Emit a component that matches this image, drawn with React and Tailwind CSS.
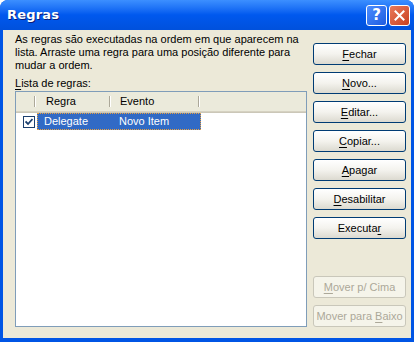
import React from "react";

const font = { fontFamily: '"Liberation Sans", Arial, sans-serif' };

function Btn({ pre = "", u, post = "", disabled = false }) {
  return (
    <div
      className={
        "h-[22px] w-[93px] rounded-[3px] border flex items-center justify-center text-[11px] leading-none " +
        (disabled
          ? "border-[#C9C7BA] bg-[#F5F4EA] text-[#ACA899]"
          : "border-[#003C74] bg-gradient-to-b from-[#FFFFFF] via-[#F4F3EE] to-[#DCDAD0] text-black")
      }
    >
      <span>
        {pre}
        <span className="underline underline-offset-[2px]">{u}</span>
        {post}
      </span>
    </div>
  );
}

export default function App() {
  return (
    <div
      className="w-[414px] h-[342px] flex flex-col bg-[#0055E5] rounded-t-[8px] overflow-hidden"
      style={font}
    >
      {/* Title bar */}
      <div className="h-[30px] shrink-0 flex items-center pl-[7px] pr-[4px] bg-gradient-to-b from-[#3C8FFF] via-[#0058EE] to-[#0051DC]">
        <div
          className="flex-1 text-white font-bold text-[13px] tracking-[0.2px]"
          style={{ fontFamily: '"DejaVu Sans", Verdana, sans-serif', textShadow: "1px 1px 0 #0A1E7A" }}
        >
          Regras
        </div>
        <div className="flex gap-[2px] items-center">
          <div className="w-[21px] h-[21px] rounded-[3px] border border-white bg-gradient-to-br from-[#4C8DFF] to-[#1E5BE0] flex items-center justify-center text-white font-bold text-[15px] leading-none" style={{ fontFamily: '"DejaVu Sans", sans-serif' }}>
            ?
          </div>
          <div className="w-[21px] h-[21px] rounded-[3px] border border-white bg-gradient-to-br from-[#E9795A] to-[#C9401F] flex items-center justify-center">
            <svg width="11" height="11" viewBox="0 0 11 11">
              <path d="M1.5 1.5 L9.5 9.5 M9.5 1.5 L1.5 9.5" stroke="white" strokeWidth="2" strokeLinecap="square" />
            </svg>
          </div>
        </div>
      </div>
      {/* Body */}
      <div className="flex-1 mx-[3px] mb-[4px] bg-[#ECE9D8] flex pl-[12px] pr-[5px]">
        <div className="w-[292px] flex flex-col pt-[3px] pb-[11px]">
          <div className="text-[11px] leading-[13px] text-black">
            As regras são executadas na ordem em que aparecem na
            <br />
            lista. Arraste uma regra para uma posição diferente para
            <br />
            mudar a ordem.
          </div>
          <div className="text-[11px] leading-[13px] mt-[5px] mb-[1px]">
            <span className="underline underline-offset-[2px]">L</span>ista de regras:
          </div>
          <div className="flex-1 border border-[#7F9DB9] bg-white flex flex-col">
            <div className="h-[19px] bg-[#EBEADB] flex text-[11px] items-center relative">
              <div className="w-[20px] h-full flex items-center justify-end">
                <div className="w-[1px] h-[11px] bg-[#ACA899] mr-[0px]" />
                <div className="w-[1px] h-[11px] bg-white" />
              </div>
              <div className="w-[75px] h-full flex items-center justify-between">
                <span className="pl-[10px]">Regra</span>
                <span className="flex"><span className="w-[1px] h-[11px] bg-[#ACA899]" /><span className="w-[1px] h-[11px] bg-white" /></span>
              </div>
              <div className="w-[89px] h-full flex items-center justify-between">
                <span className="pl-[9px]">Evento</span>
                <span className="flex"><span className="w-[1px] h-[11px] bg-[#ACA899]" /><span className="w-[1px] h-[11px] bg-white" /></span>
              </div>
            </div>
            <div className="h-[1px] bg-[#D6D2C2]" />
            <div className="h-[1px] bg-[#CBC7B8]" />
            <div className="h-[17px] flex items-center text-[11px]">
              <div className="w-[21px] flex justify-end pr-[2px]">
                <div className="w-[12px] h-[12px] border border-[#1C3F6E] bg-white flex items-center justify-center">
                  <svg width="8" height="8" viewBox="0 0 8 8">
                    <path d="M0.5 3.5 L3 6 L7.5 1" stroke="#1C3F6E" strokeWidth="1.8" fill="none" />
                  </svg>
                </div>
              </div>
              <div
                className="w-[164px] h-[17px] bg-[#316AC5] text-white flex items-center"
                style={{ outline: "1px dotted #E8A040", outlineOffset: "-1px" }}
              >
                <span className="w-[75px] pl-[7px]">Delegate</span>
                <span className="pl-[7px]">Novo Item</span>
              </div>
            </div>
          </div>
        </div>
        <div className="flex-1 flex flex-col items-end pt-[13px]">
          <div className="flex flex-col gap-[7px]">
            <Btn u="F" post="echar" />
            <Btn u="N" post="ovo..." />
            <Btn u="E" post="ditar..." />
            <Btn u="C" post="opiar..." />
            <Btn u="A" post="pagar" />
            <Btn u="D" post="esabilitar" />
            <Btn pre="Executa" u="r" />
          </div>
          <div className="flex-1" />
          <div className="flex flex-col gap-[7px] mb-[11px]">
            <Btn u="M" post="over p/ Cima" disabled />
            <Btn pre="Mover para " u="B" post="aixo" disabled />
          </div>
        </div>
      </div>
    </div>
  );
}
